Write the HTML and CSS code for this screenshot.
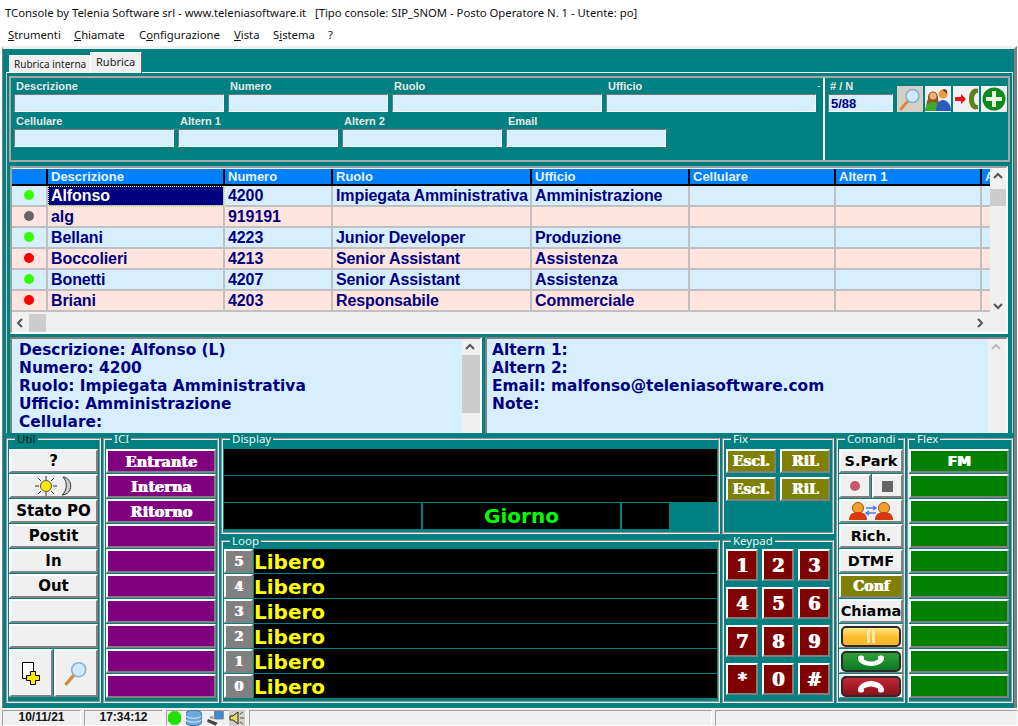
FILE: index.html
```html
<!DOCTYPE html>
<html lang="it">
<head>
    <meta charset="UTF-8">
    <title>TConsole</title>
    <link rel="stylesheet" href="styles.css">
</head>
<body>

    <div class="titlebar">TConsole by Telenia Software srl - www.teleniasoftware.it &nbsp; [Tipo console: SIP_SNOM - Posto Operatore N. 1 - Utente: po]</div>

    <div class="menubar">
        <span class="menu m1"><u>S</u>trumenti</span>
        <span class="menu m2"><u>C</u>hiamate</span>
        <span class="menu m3">C<u>o</u>nfigurazione</span>
        <span class="menu m4"><u>V</u>ista</span>
        <span class="menu m5">S<u>i</u>stema</span>
        <span class="menu">?</span>
    </div>

    <div class="main">
        <div class="tabs">
            <div class="tab">Rubrica interna</div>
            <div class="tab active">Rubrica</div>
        </div>

        <div class="tabpage">
            <div class="filter">
                <div class="filter-fields">
                    <div class="field-row">
                        <label class="field f-wide">Descrizione<input type="text"></label>
                        <label class="field f-mid">Numero<input type="text"></label>
                        <label class="field f-wide">Ruolo<input type="text"></label>
                        <label class="field f-wide">Ufficio<input type="text"></label>
                        <span class="dash">-</span>
                    </div>
                    <div class="field-row">
                        <label class="field f-mid">Cellulare<input type="text"></label>
                        <label class="field f-mid">Altern 1<input type="text"></label>
                        <label class="field f-mid">Altern 2<input type="text"></label>
                        <label class="field f-mid">Email<input type="text"></label>
                    </div>
                </div>
                <div class="filter-count">
                    <label class="field f-count">
                        # / N
                        <input type="text" value="5/88">
                    </label>
                    <div class="tool tool-search">
                        <svg width="24" height="24" viewBox="0 0 24 24"><path d="M3 22l7-8" stroke="#d98a3c" stroke-width="3" stroke-linecap="round"/><circle cx="14.500" cy="9" r="6.500" fill="#cfeaff" stroke="#8fb0cc" stroke-width="1.500"/></svg>
                    </div>
                    <div class="tool">
                        <svg width="26" height="24" viewBox="0 0 26 24"><path d="M2 21c-1-5 0-7 1-9-1-10 11-10 10 0 1 3 1 6 1 9z" fill="#8a5a24"/><circle cx="8" cy="9" r="3.500" fill="#f0b070"/><path d="M0 24c0-6 4-9 8-9s7 3 7 9z" fill="#3caa28"/><circle cx="18" cy="7" r="4.500" fill="#f09a48"/><path d="M17 3c3-2 6 0 5 4-1-2-3-3-5-4z" fill="#5a3a18"/><path d="M11 24c0-7 3-11 7-11s8 4 8 11z" fill="#2a5cc0"/></svg>
                    </div>
                    <div class="tool">
                        <svg width="26" height="24" viewBox="0 0 26 24"><path d="M2 10h6V7l5 5-5 5v-3H2z" fill="#e8101c"/><path d="M25 2c-6-2-9 4-9 10s3 12 9 10v-4c-2 .5-4-2-4-6s2-6.500 4-6z" fill="#5f7f1c"/></svg>
                    </div>
                    <div class="tool">
                        <svg width="26" height="24" viewBox="0 0 26 24"><circle cx="13" cy="12" r="11.500" fill="#0f8a1c"/><path d="M11 4h4v6h6v4h-6v6h-4v-6H5v-4h6z" fill="#e8f4e0"/></svg>
                    </div>
                </div>
            </div>

            <div class="grid-panel">
                <div class="grid-top">
                    <div class="grid-wrap">
                        <table class="contacts">
                            <colgroup>
                                <col class="c-dot"><col class="c-desc"><col class="c-num"><col class="c-role"><col class="c-office"><col class="c-alt"><col class="c-alt"><col class="c-last">
                            </colgroup>
                            <tr><th></th><th>Descrizione</th><th>Numero</th><th>Ruolo</th><th>Ufficio</th><th>Cellulare</th><th>Altern 1</th><th>A</th></tr>
                            <tr class="blue"><td><i class="dot on"></i></td><td class="selected"><span>Alfonso</span></td><td>4200</td><td>Impiegata Amministrativa</td><td>Amministrazione</td><td></td><td></td><td></td></tr>
                            <tr class="pink"><td><i class="dot off"></i></td><td>alg</td><td>919191</td><td></td><td></td><td></td><td></td><td></td></tr>
                            <tr class="blue"><td><i class="dot on"></i></td><td>Bellani</td><td>4223</td><td>Junior Developer</td><td>Produzione</td><td></td><td></td><td></td></tr>
                            <tr class="pink"><td><i class="dot busy"></i></td><td>Boccolieri</td><td>4213</td><td>Senior Assistant</td><td>Assistenza</td><td></td><td></td><td></td></tr>
                            <tr class="blue"><td><i class="dot on"></i></td><td>Bonetti</td><td>4207</td><td>Senior Assistant</td><td>Assistenza</td><td></td><td></td><td></td></tr>
                            <tr class="pink"><td><i class="dot busy"></i></td><td>Briani</td><td>4203</td><td>Responsabile</td><td>Commerciale</td><td></td><td></td><td></td></tr>
                        </table>
                    </div>
                    <div class="vscroll">
                        <svg class="arrow" width="16" height="16" viewBox="0 0 16 16"><path d="M4 10l4-4 4 4" fill="none" stroke="#555" stroke-width="2"/></svg>
                        <div class="thumb thumb-grid"></div>
                        <svg class="arrow arrow-end" width="16" height="16" viewBox="0 0 16 16"><path d="M4 6l4 4 4-4" fill="none" stroke="#555" stroke-width="2"/></svg>
                    </div>
                </div>
                <div class="hscroll">
                    <svg width="17" height="18" viewBox="0 0 17 18"><path d="M10 5L6 9l4 4" fill="none" stroke="#555" stroke-width="2"/></svg>
                    <div class="thumb thumb-h"></div>
                    <svg class="arrow-end" width="17" height="18" viewBox="0 0 17 18"><path d="M7 5l4 4-4 4" fill="none" stroke="#555" stroke-width="2"/></svg>
                </div>
            </div>

            <div class="details">
                <div class="detail-box detail-left">
                    <div class="detail-text">
                        Descrizione: Alfonso (L)<br>
                        Numero: 4200<br>
                        Ruolo: Impiegata Amministrativa<br>
                        Ufficio: Amministrazione<br>
                        Cellulare:
                    </div>
                    <div class="vscroll">
                        <svg class="arrow" width="16" height="16" viewBox="0 0 16 16"><path d="M4 10l4-4 4 4" fill="none" stroke="#555" stroke-width="2"/></svg>
                        <div class="thumb thumb-detail"></div>
                    </div>
                </div>
                <div class="detail-box detail-right">
                    <div class="detail-text">
                        Altern 1:<br>
                        Altern 2:<br>
                        Email: malfonso@teleniasoftware.com<br>
                        Note:
                    </div>
                    <div class="vscroll">
                        <svg class="arrow" width="16" height="16" viewBox="0 0 16 16"><path d="M4 10l4-4 4 4" fill="none" stroke="#bbb" stroke-width="2"/></svg>
                    </div>
                </div>
            </div>
        </div>

        <div class="bottom">
            <fieldset class="group g-util">
                <legend class="dark">Util</legend>
                <div class="stack">
                    <div class="btn">?</div>
                    <div class="btn">
                        <svg width="38" height="22" viewBox="0 0 38 22"><g stroke="#333" stroke-width="1"><path d="M11 1v4M11 17v4M0 11h4M18 11h4M3 3l3 3M19 3l-3 3M3 19l3-3M19 19l-3-3"/></g><circle cx="11" cy="11" r="5.500" fill="#ffe800" stroke="#555"/><path d="M28 2c10 1 11 17-1 18 5-4 6-13 1-18z" fill="#ccc" stroke="#333"/></svg>
                    </div>
                    <div class="btn">Stato PO</div>
                    <div class="btn">Postit</div>
                    <div class="btn">In</div>
                    <div class="btn">Out</div>
                    <div class="btn"></div>
                    <div class="btn"></div>
                    <div class="btn-pair">
                        <div class="btn btn-big">
                            <svg width="20" height="24" viewBox="0 0 20 24"><path d="M1.500 1.500h11v16h-11z" fill="#fff" stroke="#000"/><path d="M9.500 10.500h5v4h4v5h-4v4h-5v-4h-4v-5h4z" fill="#ffe800" stroke="#000"/></svg>
                        </div>
                        <div class="btn btn-big">
                            <svg width="26" height="26" viewBox="0 0 24 24"><path d="M3 22l7-8" stroke="#d98a3c" stroke-width="3" stroke-linecap="round"/><circle cx="14.500" cy="9" r="6.500" fill="#cfeaff" stroke="#8fb0cc" stroke-width="1.500"/></svg>
                        </div>
                    </div>
                </div>
            </fieldset>

            <fieldset class="group g-ici">
                <legend>ICI</legend>
                <div class="stack">
                    <div class="btn purple">Entrante</div>
                    <div class="btn purple">Interna</div>
                    <div class="btn purple">Ritorno</div>
                    <div class="btn purple"></div>
                    <div class="btn purple"></div>
                    <div class="btn purple"></div>
                    <div class="btn purple"></div>
                    <div class="btn purple"></div>
                    <div class="btn purple"></div>
                    <div class="btn purple"></div>
                </div>
            </fieldset>

            <fieldset class="group g-display">
                <legend>Display</legend>
                <div class="display-row"></div>
                <div class="display-row"></div>
                <div class="display-row split">
                    <div class="cell c1"></div>
                    <div class="cell c2">Giorno</div>
                    <div class="cell c3"></div>
                </div>
            </fieldset>

            <fieldset class="group g-fix">
                <legend>Fix</legend>
                <div class="fix-grid">
                    <div class="btn olive">Escl.</div>
                    <div class="btn olive">RiL</div>
                    <div class="btn olive">Escl.</div>
                    <div class="btn olive">RiL</div>
                </div>
            </fieldset>

            <fieldset class="group g-comandi">
                <legend>Comandi</legend>
                <div class="stack">
                    <div class="btn">S.Park</div>
                    <div class="btn-pair">
                        <div class="btn"><i class="rec"></i></div>
                        <div class="btn"><i class="stop"></i></div>
                    </div>
                    <div class="btn">
                        <svg width="44" height="20" viewBox="0 0 44 20"><circle cx="9" cy="7" r="5.500" fill="#f0a030" stroke="#a85010"/><path d="M0 19c0-6 4-8 9-8s9 2 9 8z" fill="#d83a10"/><circle cx="35" cy="7" r="5.500" fill="#f0a030" stroke="#a85010"/><path d="M26 19c0-6 4-8 9-8s9 2 9 8z" fill="#d83a10"/><path d="M17 7h9M24 5l3 2-3 2M27 12h-9M20 10l-3 2 3 2" fill="none" stroke="#4a80e0" stroke-width="1.500"/></svg>
                    </div>
                    <div class="btn">Rich.</div>
                    <div class="btn">DTMF</div>
                    <div class="btn olive">Conf</div>
                    <div class="btn">Chiama</div>
                    <div class="btn btn-call"><span class="pill pill-yellow"><i class="bars"></i></span></div>
                    <div class="btn btn-call"><span class="pill pill-green">
                        <svg width="30" height="12" viewBox="0 0 30 12"><path d="M2 2c1-2 5-2 6 0 0 2-1 2 1 3 4 2 8 2 12 0 2-1 1-1 1-3 1-2 5-2 6 0 1 6-7 9-13 9S1 8 2 2z" fill="#fff"/></svg>
                    </span></div>
                    <div class="btn btn-call"><span class="pill pill-red">
                        <svg width="30" height="14" viewBox="0 0 30 14"><path d="M2 12c-1-6 7-10 13-10s14 4 13 10c-1 2-5 2-6 0 0-2 1-2-1-3-4-2-8-2-12 0-2 1-1 1-1 3-1 2-5 2-6 0z" fill="#fff"/></svg>
                    </span></div>
                </div>
            </fieldset>

            <fieldset class="group g-flex">
                <legend>Flex</legend>
                <div class="stack">
                    <div class="btn green">FM</div>
                    <div class="btn green"></div>
                    <div class="btn green"></div>
                    <div class="btn green"></div>
                    <div class="btn green"></div>
                    <div class="btn green"></div>
                    <div class="btn green"></div>
                    <div class="btn green"></div>
                    <div class="btn green"></div>
                    <div class="btn green"></div>
                </div>
            </fieldset>

            <fieldset class="group g-loop">
                <legend>Loop</legend>
                <div class="loop-row"><div class="btn grey">5</div><div class="loop-text">Libero</div></div>
                <div class="loop-row"><div class="btn grey">4</div><div class="loop-text">Libero</div></div>
                <div class="loop-row"><div class="btn grey">3</div><div class="loop-text">Libero</div></div>
                <div class="loop-row"><div class="btn grey">2</div><div class="loop-text">Libero</div></div>
                <div class="loop-row"><div class="btn grey">1</div><div class="loop-text">Libero</div></div>
                <div class="loop-row"><div class="btn grey">0</div><div class="loop-text">Libero</div></div>
            </fieldset>

            <fieldset class="group g-keypad">
                <legend>Keypad</legend>
                <div class="keypad">
                    <div class="btn key">1</div><div class="btn key">2</div><div class="btn key">3</div>
                    <div class="btn key">4</div><div class="btn key">5</div><div class="btn key">6</div>
                    <div class="btn key">7</div><div class="btn key">8</div><div class="btn key">9</div>
                    <div class="btn key">*</div><div class="btn key">0</div><div class="btn key">#</div>
                </div>
            </fieldset>
        </div>
    </div>

    <div class="statusbar">
        <div class="st-panel st-date">10/11/21</div>
        <div class="st-panel st-date">17:34:12</div>
        <div class="st-panel st-icons">
            <svg width="14" height="14" viewBox="0 0 14 14"><path d="M4 0h6l4 4v6l-4 4H4l-4-4V4z" fill="#22e000"/></svg>
            <svg width="16" height="16" viewBox="0 0 16 16"><path d="M0 3c0-4 16-4 16 0v10c0 4-16 4-16 0z" fill="#6fa8dc" stroke="#3a6ea5"/><path d="M0 6c2 3 14 3 16 0M0 10c2 3 14 3 16 0" fill="none" stroke="#e4f0fa"/></svg>
            <svg width="18" height="16" viewBox="0 0 18 16"><path d="M8 1h9v8H8z" fill="#3a8ae0" stroke="#777"/><path d="M1 9l10 4-2 3-9-4z" fill="#444"/><path d="M3 6h4v3H3z" fill="#aaa"/></svg>
            <div class="speaker">
                <svg width="16" height="16" viewBox="0 0 16 16"><path d="M1 6h3l5-4v12l-5-4H1z" fill="#e8dc60" stroke="#222"/><path d="M11 4l3-2M11 8h4M11 12l3 2" stroke="#555"/></svg>
            </div>
        </div>
        <div class="st-panel st-fill"></div>
        <div class="st-panel st-last"></div>
    </div>

</body>
</html>
```

FILE: styles.css
```css
* {
    box-sizing: border-box;
}
body {
    margin: 0;
    width: 1018px;
    height: 726px;
    overflow: hidden;
    background-color: #fff;
    font-family: "Liberation Sans", Arial, sans-serif;
}

/* window top */
.titlebar {
    height: 24px;
    padding: 5px 0 0 5px;
    font-family: "Noto Sans", sans-serif;
    font-size: 11.3px;
    line-height: 16px;
    color: #111;
    white-space: pre;
}
.menubar {
    height: 22px;
    display: flex;
    padding: 3px 0 0 8px;
    font-family: "Noto Sans", sans-serif;
    font-size: 11.3px;
    line-height: 16px;
    color: #111;
}
.m1 { width: 66px; }
.m2 { width: 65px; }
.m3 { width: 95px; }
.m4 { width: 39px; }
.m5 { width: 55px; }

.main {
    height: 662px;
    margin: 0 1px 0 2px;
    padding: 3px 0 0 3px;
    background-color: #008080;
    border-top: 3px solid #f0f0f0;
    border-left: 1px solid #808080;
    border-right: 3px solid #808080;
}
.tabs {
    height: 20px;
    display: flex;
    align-items: flex-end;
    padding-left: 3px;
}
.tab {
    width: 81px;
    height: 17px;
    padding-left: 5px;
    background-color: #f0f0f0;
    border-top: 1px solid #fff;
    font-family: "Noto Sans", sans-serif;
    font-size: 10px;
    line-height: 17px;
    color: #222;
    white-space: nowrap;
}
.tab.active {
    width: 52px;
    height: 21px;
    margin-bottom: -1px;
    padding: 0 0 0 5px;
    border: 1px solid #fff;
    border-right: 1px solid #666;
    border-bottom: 0;
    font-size: 11px;
    position: relative;
}
.tabpage {
    height: 361px;
    width: 1007px;
    padding: 3px 0 0 2px;
    overflow: hidden;
    border-top: 1px solid #fff;
    border-left: 1px solid #ccc;
    border-right: 1px solid #ccc;
}

/* search fields */
.filter {
    height: 86px;
    width: 1001px;
    display: flex;
    border: 2px solid #a8a8a8;
    border-right-width: 2px;
}
.filter-fields {
    width: 812px;
    padding-left: 3px;
}
.field-row {
    height: 35px;
    padding-top: 1px;
    display: flex;
    gap: 4px;
    position: relative;
}
.field {
    display: flex;
    flex-direction: column;
    height: 34px;
    padding-left: 2px;
    font-size: 11px;
    font-weight: bold;
    line-height: 14px;
    color: #e8e8e8;
}
.field input {
    height: 18px;
    margin: 1px 0 0 -2px;
    padding: 0 0 0 2px;
    background-color: #d7eefe;
    border: 1px solid;
    border-color: #777 #fff #fff #777;
    border-top-width: 1px;
    outline: none;
}
.f-wide { width: 210px; }
.f-mid { width: 160px; }
.f-count { width: 65px; }
.f-count input {
    font-family: "Liberation Sans", sans-serif;
    font-size: 13px;
    font-weight: bold;
    color: #000080;
}
.dash {
    color: #ddd;
    font-size: 10px;
    line-height: 10px;
    margin: 2px 0 0 -3px;
}
.filter-count {
    flex: 1;
    display: flex;
    align-items: flex-start;
    gap: 2px;
    padding: 1px 0 0 3px;
    border-left: 1px solid #fff;
    border-left-width: 2px;
}
.f-count {
    margin-right: 2px;
}
.tool {
    width: 26px;
    height: 26px;
    margin-top: 7px;
    display: flex;
    align-items: center;
    justify-content: center;
    background-color: #f0f0f0;
}
.tool-search {
    background-color: #d4d0c8;
}

/* contacts table */
.grid-panel {
    width: 998px;
    height: 168px;
    margin: 4px 0 0 1px;
    background-color: #f0f0f0;
    border: 2px solid;
    border-color: #a0a0a0 #fff #fff #a0a0a0;
}
.grid-top {
    display: flex;
    height: 146px;
}
.grid-wrap {
    width: 978px;
    overflow: hidden;
    padding-top: 1px;
}
.contacts {
    width: 970px;
    table-layout: fixed;
    border-collapse: separate;
    border-spacing: 0;
    margin: 0;
}
.c-dot { width: 36px; }
.c-desc { width: 177px; }
.c-num { width: 108px; }
.c-role { width: 199px; }
.c-office { width: 158px; }
.c-alt { width: 146px; }
.c-last { width: 100px; }
.contacts th {
    height: 17px;
    padding: 0 0 0 3px;
    background-color: #0080ff;
    border-right: 2px solid #000;
    border-bottom: 2px solid #000;
    color: #e8f4ff;
    font-size: 13px;
    line-height: 15px;
    text-align: left;
    white-space: nowrap;
    overflow: hidden;
}
.contacts td {
    height: 21px;
    padding: 0 0 0 3px;
    border-right: 2px solid #c0c0c0;
    border-bottom: 2px solid #c0c0c0;
    color: #000080;
    font-size: 16px;
    font-weight: bold;
    line-height: 19px;
    letter-spacing: -0.1px;
    white-space: nowrap;
    overflow: hidden;
}
.contacts td:first-child {
    text-align: center;
    padding: 0;
}
.blue td { background-color: #d7eeff; }
.pink td { background-color: #ffe4df; }
.contacts .selected {
    padding: 0;
    background-color: #000080;
    color: #fff;
    outline: 1px dotted #ffff80;
    outline-offset: -1px;
    padding-left: 3px;
}
.dot {
    display: inline-block;
    width: 10px;
    height: 10px;
    margin-top: 4px;
    border-radius: 50%;
    vertical-align: top;
}
.dot.on { background-color: #33ff00; }
.dot.off { background-color: #666; }
.dot.busy { background-color: #ff0000; }

/* scroll bars */
.vscroll {
    width: 16px;
    flex: none;
    display: flex;
    flex-direction: column;
    background-color: #f0f0f0;
}
.arrow {
    flex: none;
}
.arrow-end {
    margin-top: auto;
}
.thumb {
    background-color: #cdcdcd;
}
.thumb-grid {
    height: 17px;
    margin-top: 5px;
}
.hscroll {
    height: 18px;
    display: flex;
    align-items: stretch;
}
.thumb-h {
    width: 17px;
}
.hscroll .arrow-end {
    margin: 0 0 0 auto;
    margin-right: 18px;
}

/* text panes under the table */
.details {
    display: flex;
    gap: 3px;
    height: 100px;
    width: 998px;
    margin: 3px 0 0 1px;
}
.detail-box {
    display: flex;
    height: 100px;
    background-color: #d7eeff;
    border: 2px solid;
    border-color: #808080 #fff #fff #808080;
}
.detail-left { width: 472px; }
.detail-right { flex: 1; }
.detail-text {
    flex: 1;
    padding: 2px 0 0 7px;
    color: #000080;
    font-family: "DejaVu Sans", sans-serif;
    font-size: 15.4px;
    font-weight: bold;
    line-height: 18px;
    white-space: nowrap;
}
.detail-right .detail-text {
    padding-left: 5px;
}
.thumb-detail {
    height: 58px;
}
.detail-box .vscroll {
    width: 18px;
}

/* bottom panels */
.bottom {
    width: 1007px;
    height: 271px;
    display: grid;
    grid-template-columns: 95px 116px 499px 112px 69px 106px;
    grid-template-rows: 101px 168px;
    column-gap: 2px;
    row-gap: 1px;
}
.group {
    min-width: 0;
    margin: 0;
    padding: 4px 1px 0;
    border: 2px groove #e8e8e8;
}
.group legend {
    margin-left: 6px;
    padding: 0 2px;
    font-family: "Noto Sans", sans-serif;
    font-size: 11.5px;
    line-height: 12px;
    color: #f0f0f0;
}
.group legend.dark {
    color: #111;
}
.g-util, .g-ici, .g-comandi, .g-flex {
    grid-row: 1 / 3;
}
.g-util { grid-column: 1; }
.g-ici { grid-column: 2; }
.g-display { grid-column: 3; grid-row: 1; }
.g-fix { grid-column: 4; grid-row: 1; }
.g-comandi { grid-column: 5; padding: 4px 0 0 1px; }
.g-flex { grid-column: 6; padding: 4px 2px 0 0; }
.g-loop { grid-column: 3; grid-row: 2; padding-top: 2px; }
.g-keypad { grid-column: 4; grid-row: 2; padding-top: 2px; }

.stack {
    display: flex;
    flex-direction: column;
    gap: 1px;
}
.btn {
    height: 24px;
    display: flex;
    align-items: center;
    justify-content: center;
    overflow: hidden;
    background-color: #f0f0f0;
    border: 2px solid;
    border-color: #fff #808080 #808080 #fff;
    color: #000;
    font-family: "DejaVu Sans", sans-serif;
    font-size: 14.5px;
    font-weight: bold;
    white-space: nowrap;
}
.g-util .btn {
    font-size: 15px;
}
.btn-pair {
    display: flex;
    gap: 1px;
}
.btn-pair .btn {
    flex: 1;
}
.g-util .btn-big {
    height: 48px;
}
.g-ici .purple { background-color: #800080; color: #fff; text-shadow: 1px 0 #fff; font-family: "DejaVu Serif", serif; font-size: 14.5px; }
.olive, .g-comandi .olive { background-color: #808000; color: #fff; text-shadow: 1px 0 #fff; font-family: "DejaVu Serif", serif; font-size: 14px; }
.g-flex .green { background-color: #008000; color: #fff; text-shadow: 1px 0 #fff; font-size: 14px; }
.loop-row .grey { background-color: #808080; color: #fff; text-shadow: 1px 0 #fff; font-family: "DejaVu Serif", serif; font-size: 13px; }

.display-row {
    height: 26px;
    margin-bottom: 1px;
    background-color: #000;
}
.display-row.split {
    display: flex;
    gap: 2px;
    background-color: transparent;
}
.cell {
    background-color: #000;
    color: #00ff00;
    font-family: "DejaVu Sans", sans-serif;
    font-size: 20px;
    font-weight: bold;
    line-height: 26px;
    text-align: center;
}
.c1 { width: 197px; }
.c2 { width: 197px; }
.c3 { width: 47px; }

.fix-grid {
    display: grid;
    grid-template-columns: 50px 50px;
    gap: 4px;
    justify-content: center;
}

.loop-row {
    height: 24px;
    margin-bottom: 1px;
    display: flex;
    gap: 1px;
}
.loop-row .btn {
    width: 29px;
    flex: none;
}
.loop-text {
    flex: 1;
    background-color: #000;
    color: #ffff00;
    font-family: "DejaVu Sans", sans-serif;
    font-size: 20px;
    font-weight: bold;
    line-height: 27px;
}
.keypad {
    display: grid;
    grid-template-columns: repeat(3, 32px);
    grid-auto-rows: 32px;
    gap: 6px 4px;
    justify-content: center;
}
.keypad .key {
    height: 32px;
    background-color: #800000;
    color: #fff;
    font-family: "DejaVu Serif", serif;
    font-size: 18px;
    text-shadow: 1px 0 #fff;
}

.rec {
    width: 10px;
    height: 10px;
    border-radius: 50%;
    background-color: #c45870;
}
.stop {
    width: 11px;
    height: 11px;
    background-color: #666;
}
.btn-call {
    border-width: 1px;
}
.pill {
    width: 60px;
    height: 21px;
    display: flex;
    align-items: center;
    justify-content: center;
    border: 2px solid #2a2a2a;
    border-radius: 5px;
}
.pill-yellow { background: linear-gradient(#ffe680, #fdb92e 55%); }
.pill-green { background: linear-gradient(#2fa03a, #0d7a22); }
.pill-red { background: linear-gradient(#c02a34, #8c1018); }
.bars {
    width: 8px;
    height: 14px;
    border-left: 3px solid #ffe9a8;
    border-right: 3px solid #ffe9a8;
}

/* status bar */
.statusbar {
    height: 18px;
    display: flex;
    gap: 3px;
    padding: 2px 0 0 2px;
    background-color: #f0f0f0;
}
.st-panel {
    height: 16px;
    border-top: 1px solid #a0a0a0;
    border-left: 1px solid #a0a0a0;
    border-right: 1px solid #fff;
    border-bottom: 1px solid #fff;
}
.st-date {
    width: 79px;
    font-size: 12px;
    font-weight: bold;
    line-height: 13px;
    text-align: center;
    color: #111;
}
.st-icons {
    width: 80px;
    display: flex;
    align-items: center;
    gap: 5px;
    padding-left: 1px;
}
.speaker {
    width: 16px;
    height: 16px;
    background-color: #d4d0c8;
}
.st-fill { width: 463px; }
.st-last { flex: 1; }
```
